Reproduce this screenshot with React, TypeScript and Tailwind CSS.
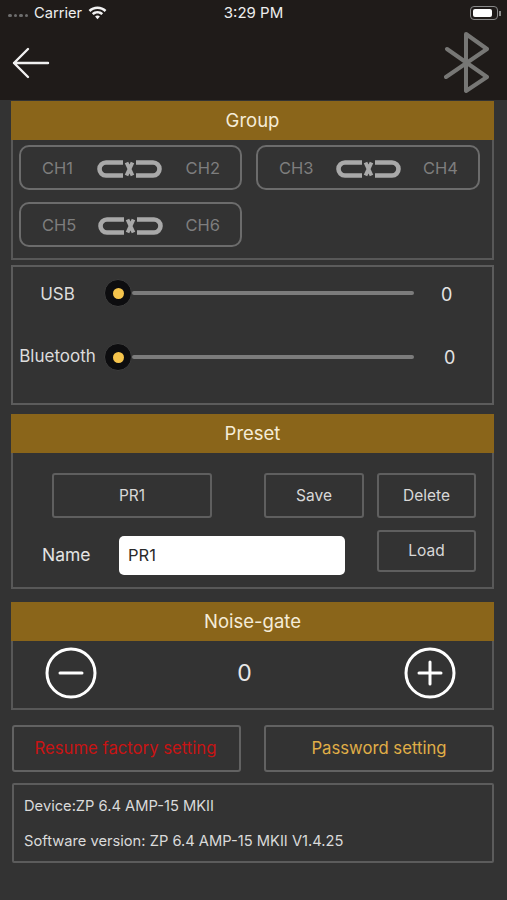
function BackArrow() {
  return (
    <svg width="38" height="32" viewBox="0 0 38 32" fill="none" stroke="#f0f0f0" strokeWidth="2.400" strokeLinecap="round" strokeLinejoin="round">
      <path d="M36 16 H2 M16 2 L2 16 L16 30" />
    </svg>
  );
}

function BluetoothMark() {
  return (
    <svg width="46" height="62" viewBox="0 0 46 62" fill="none">
      <path
        d="M3 17 L43 45 L22 59 L22 2 L43 17 L2 45"
        stroke="#777775"
        strokeWidth="4"
        strokeLinejoin="round"
        strokeLinecap="round"
      />
    </svg>
  );
}

function WifiIcon() {
  return (
    <svg width="19" height="14" viewBox="0 0 19 14" fill="#f2f2f2">
      <path d="M9.5 0.5C6 0.5 2.900 1.900 0.600 4.100L2.300 5.900C4.200 4.100 6.700 3 9.500 3C12.300 3 14.800 4.100 16.700 5.900L18.400 4.100C16.100 1.900 13 0.500 9.500 0.500Z" />
      <path d="M9.500 5C7.300 5 5.300 5.900 3.900 7.300L5.600 9.100C6.600 8.100 8 7.500 9.500 7.500C11 7.500 12.400 8.100 13.400 9.100L15.100 7.300C13.700 5.900 11.700 5 9.500 5Z" />
      <path d="M9.500 9.500C8.500 9.500 7.700 9.900 7.100 10.500L9.500 13.200L11.900 10.500C11.300 9.900 10.500 9.500 9.500 9.500Z" />
    </svg>
  );
}

function LinkMark() {
  return (
    <svg width="65" height="18" viewBox="0 0 65 18" fill="none" stroke="#a9a9a9" strokeWidth="4.600" className="mt-[1px]">
      <path d="M26 2.500 H9 A6.500 6.500 0 0 0 9 15.500 H26" />
      <path d="M39 2.500 H56 A6.500 6.500 0 0 1 56 15.500 H39" />
      <path d="M29.500 2.500 L35.500 15.500 M35.500 2.500 L29.500 15.500" strokeWidth="3.800" />
    </svg>
  );
}

function ChannelLink({ left, right }: { left: string; right: string }) {
  return (
    <div className="flex h-[45px] items-center justify-between rounded-[10px] border-2 border-[#6c6c6c] pl-[21px] pr-[20px] pt-[1px] text-[16.500px] text-[#7e7e7e]">
      <span>{left}</span>
      <LinkMark />
      <span>{right}</span>
    </div>
  );
}

function PanelHeader({ title }: { title: string }) {
  return (
    <div className="-mx-[2px] flex h-[39px] items-center justify-center bg-[#8a651a] text-[18.500px] text-[#f5ecd8]">
      {title}
    </div>
  );
}

function SliderRow({ label, className, labelClass, valueClass }: { label: string; className: string; labelClass?: string; valueClass: string }) {
  return (
    <div className={`flex items-center ${className}`}>
      <span className={`w-[77px] shrink-0 text-center text-[17px] text-[#dcdcdc] ${labelClass ?? ""}`}>{label}</span>
      <span className="relative z-10 ml-[8px] flex h-[28px] w-[28px] shrink-0 items-center justify-center rounded-full border border-[#3d3d3d] bg-[#0d0d0f]">
        <span className="h-[11px] w-[11px] rounded-full bg-[#f5c44c]" />
      </span>
      <span className="h-[4px] w-[282px] rounded-full bg-[#7c7c7c]" />
      <span className={`text-[18px] text-[#e4e4e4] ${valueClass}`}>0</span>
    </div>
  );
}

function OutlineButton({ label, className }: { label: string; className: string }) {
  return (
    <button className={`rounded-[3px] border-2 border-[#5f5f5f] text-[15.500px] text-[#d8d8d8] ${className}`}>
      {label}
    </button>
  );
}

function RoundControl({ plus }: { plus?: boolean }) {
  return (
    <svg width="52" height="52" viewBox="0 0 52 52" fill="none" stroke="#ffffff">
      <circle cx="26" cy="26" r="24" strokeWidth="3" />
      <path d="M15 26 H37" strokeWidth="3" strokeLinecap="round" />
      {plus && <path d="M26 15 V37" strokeWidth="3" strokeLinecap="round" />}
    </svg>
  );
}

export default function App() {
  return (
    <div className="flex h-[900px] w-[507px] flex-col overflow-hidden bg-[#333333] font-['Inter','Liberation_Sans',sans-serif]">
      {/* Top bar */}
      <div className="h-[100px] shrink-0 bg-[#1f1b19]">
        <div className="flex h-[26px] items-center justify-between pl-[8px] pr-[6px] text-[14.700px] text-[#eeeeee]">
          <div className="flex w-[160px] items-center">
            <span className="mr-[6px] mt-[5px] flex gap-[2px]">
              <i className="h-[3.500px] w-[3.500px] rounded-full bg-[#6e6e6e]" />
              <i className="h-[3.500px] w-[3.500px] rounded-full bg-[#6e6e6e]" />
              <i className="h-[3.500px] w-[3.500px] rounded-full bg-[#6e6e6e]" />
              <i className="h-[3.500px] w-[3.500px] rounded-full bg-[#6e6e6e]" />
            </span>
            <span className="mr-[6px]">Carrier</span>
            <WifiIcon />
          </div>
          <span className="mr-[2px] text-[15px]">3:29 PM</span>
          <div className="flex w-[160px] items-center justify-end">
            <span className="flex h-[14px] w-[28px] items-center rounded-[4px] border border-[#8a8a8a] p-[2px]">
              <span className="h-full w-[19px] rounded-[2px] bg-white" />
            </span>
            <span className="ml-[1px] h-[5px] w-[1.500px] bg-[#8a8a8a]" />
          </div>
        </div>
        <div className="flex h-[74px] items-center justify-between pl-[12px] pr-[17px]">
          <BackArrow />
          <div className="mb-[1px]">
            <BluetoothMark />
          </div>
        </div>
      </div>

      <div className="flex flex-col pl-[11px] pr-[13px]">
        {/* Group */}
        <section className="mt-[1px] h-[159px] border-2 border-t-0 border-[#585858]">
          <PanelHeader title="Group" />
          <div className="grid grid-cols-[223px_224px] gap-x-[14px] gap-y-[12px] pl-[6px] pt-[5px]">
            <ChannelLink left="CH1" right="CH2" />
            <ChannelLink left="CH3" right="CH4" />
            <ChannelLink left="CH5" right="CH6" />
          </div>
        </section>

        {/* Levels */}
        <section className="mt-[5px] h-[140px] border-2 border-[#5c5c5c] pl-[6px]">
          <SliderRow label="USB" className="mt-[12px] h-[28px]" labelClass="mt-[3px]" valueClass="ml-[27px] mt-[2px]" />
          <SliderRow label="Bluetooth" className="mt-[36px] h-[28px]" valueClass="ml-[30px]" />
        </section>

        {/* Preset */}
        <section className="mt-[9px] h-[175px] border-2 border-t-0 border-[#585858]">
          <PanelHeader title="Preset" />
          <div className="flex pt-[20px]">
            <OutlineButton label="PR1" className="ml-[39px] h-[45px] w-[160px]" />
            <OutlineButton label="Save" className="ml-[52px] h-[45px] w-[100px]" />
            <OutlineButton label="Delete" className="ml-[13px] h-[45px] w-[99px]" />
          </div>
          <div className="mt-[12px] flex items-start">
            <span className="ml-[29px] mt-[12px] w-[77px] text-[17.500px] text-[#e4e4e4]">Name</span>
            <div className="mt-[6px] flex h-[39px] w-[226px] items-center rounded-[5px] bg-white pl-[9px] text-[16.500px] text-[#2a2a2a]">
              PR1
            </div>
            <OutlineButton label="Load" className="ml-[32px] h-[42px] w-[99px]" />
          </div>
        </section>

        {/* Noise-gate */}
        <section className="mt-[13px] h-[108px] border-2 border-t-0 border-[#585858]">
          <PanelHeader title="Noise-gate" />
          <div className="flex h-[67px] items-center justify-between pb-[3px] pl-[32px] pr-[36px]">
            <RoundControl />
            <span className="mr-[12px] text-[23px] text-[#e8e8e8]">0</span>
            <RoundControl plus />
          </div>
        </section>

        {/* Reset and password */}
        <div className="mt-[15px] flex justify-between pl-[1px]">
          <button className="h-[47px] w-[229px] rounded-[3px] border-2 border-[#626262] pr-[2px] text-[16.700px] text-[#c81414]">
            Resume factory setting
          </button>
          <button className="h-[47px] w-[230px] rounded-[3px] border-2 border-[#626262] text-[16.700px] text-[#e0ae47]">
            Password setting
          </button>
        </div>

        {/* Device info */}
        <div className="ml-[1px] mt-[11px] flex h-[80px] flex-col justify-center gap-[18px] rounded-[2px] border-2 border-[#5c5c5c] pl-[10px] pt-[1px] text-[14.700px] leading-[17px] text-[#dadada]">
          <span>Device:ZP 6.4 AMP-15 MKII</span>
          <span>Software version: ZP 6.4 AMP-15 MKII V1.4.25</span>
        </div>
      </div>
    </div>
  );
}
